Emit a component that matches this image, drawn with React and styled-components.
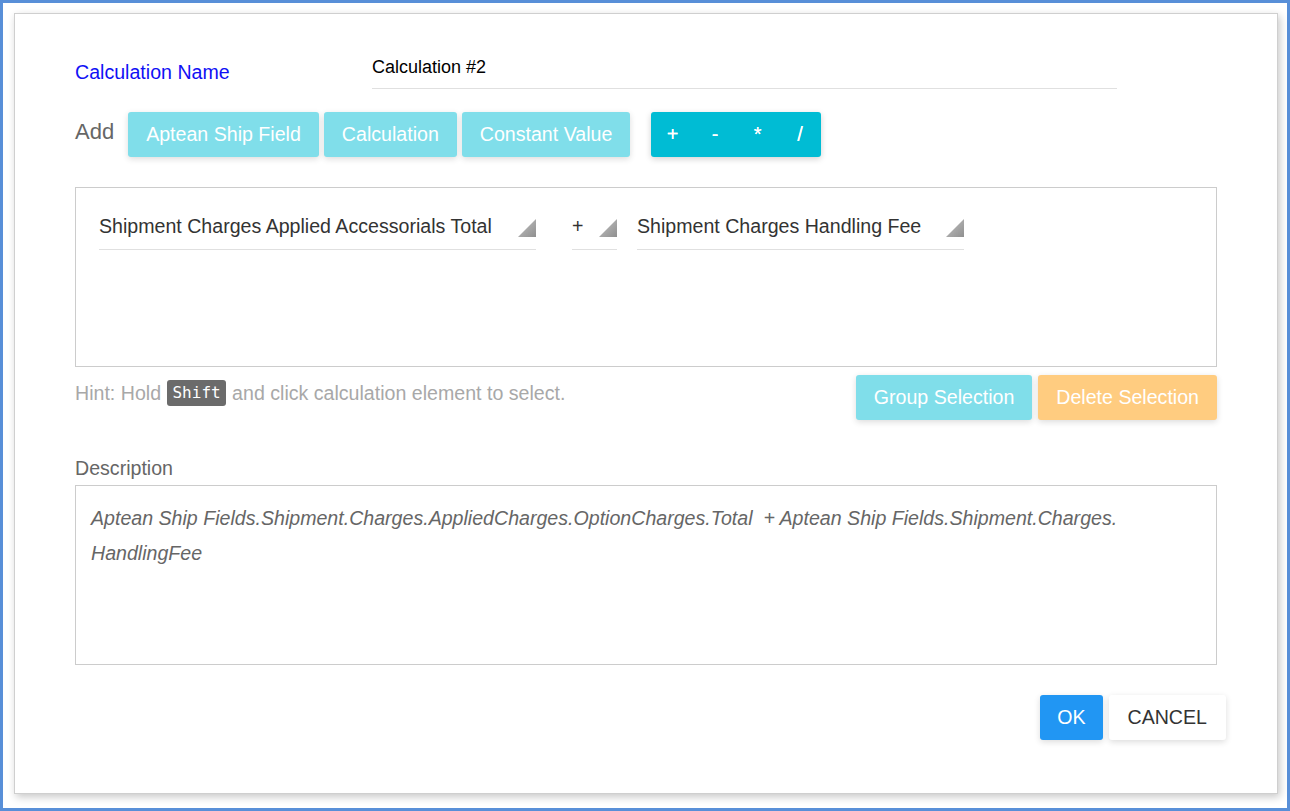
import React from 'react';
import styled, { createGlobalStyle } from 'styled-components';

const GlobalStyle = createGlobalStyle`
  html, body {
    margin: 0;
    padding: 0;
    background: #fff;
  }
  * {
    box-sizing: border-box;
  }
`;

const Frame = styled.div`
  height: 100vh;
  border: 3px solid #588fd8;
  padding: 10px 9px 14px 11px;
  font-family: "Liberation Sans", Arial, sans-serif;
`;

const Dialog = styled.div`
  height: 100%;
  background: #fff;
  border: 1px solid #cfcfcf;
  box-shadow: 2px 3px 8px rgba(0, 0, 0, 0.22);
  padding: 38px 60px 0 60px;
`;

const NameRow = styled.div`
  display: flex;
  align-items: flex-start;
`;

const NameLabel = styled.label`
  width: 297px;
  padding-top: 8px;
  font-size: 19.6px;
  line-height: 24px;
  color: #1010f5;
`;

const NameInput = styled.div`
  width: 745px;
  padding: 3px 0 9px;
  font-size: 18px;
  line-height: 24px;
  color: #000;
  border-bottom: 1px solid #e0e0e0;
`;

const AddRow = styled.div`
  display: flex;
  align-items: flex-start;
  margin-top: 23px;
`;

const AddLabel = styled.span`
  font-size: 22px;
  line-height: 26px;
  padding-top: 7px;
  margin-right: 14px;
  color: #666;
`;

const Button = styled.button`
  height: 45px;
  padding: 0 ${(p) => p.$pad || 18}px;
  border: none;
  border-radius: 3px;
  font-family: inherit;
  font-size: 19.6px;
  color: ${(p) => (p.$kind === 'cancel' ? '#333' : '#fff')};
  background: ${(p) =>
    ({
      light: '#80deea',
      warn: '#ffcc80',
      primary: '#2196f3',
      cancel: '#fff',
    }[p.$kind] || '#80deea')};
  box-shadow: 0 2px 6px rgba(0, 0, 0, 0.14);
  white-space: nowrap;
  cursor: pointer;
`;

const ButtonGroup = styled.div`
  display: flex;
  gap: ${(p) => p.$gap || 5}px;
`;

const OpGroup = styled.div`
  display: flex;
  margin-left: 21px;
  border-radius: 3px;
  background: #00bcd4;
  box-shadow: 0 2px 6px rgba(0, 0, 0, 0.18);
  overflow: hidden;
`;

const OpButton = styled.button`
  width: 42.5px;
  height: 45px;
  padding: 0;
  border: none;
  background: transparent;
  color: #fff;
  font-family: inherit;
  font-size: 20px;
  font-weight: 400;
  text-shadow: 0 0 0.6px #fff;
  cursor: pointer;
`;

const Canvas = styled.div`
  margin-top: 30px;
  height: 180px;
  border: 1px solid #cccccc;
  padding: 17px 23px;
  display: flex;
  align-items: flex-start;
`;

const Select = styled.div`
  display: flex;
  justify-content: space-between;
  width: ${(p) => p.$width}px;
  height: 45px;
  margin-left: ${(p) => p.$gap || 0}px;
  border-bottom: 1px solid #e0e0e0;
`;

const SelectText = styled.span`
  padding-top: 9px;
  font-size: 19.6px;
  line-height: 24px;
  color: #333;
  white-space: nowrap;
`;

const Caret = styled.span`
  align-self: flex-end;
  width: 18px;
  height: 18px;
  margin-bottom: 12px;
  background: linear-gradient(135deg, #c4c4c4, #8f8f8f);
  clip-path: polygon(100% 0, 100% 100%, 0 100%);
`;

const HintRow = styled.div`
  display: flex;
  justify-content: space-between;
  align-items: flex-start;
  margin-top: 8px;
`;

const Hint = styled.p`
  margin: 0;
  padding-top: 5px;
  font-size: 19.6px;
  line-height: 26px;
  color: #a8a8a8;
`;

const Kbd = styled.kbd`
  display: inline-block;
  height: 26px;
  padding: 0 5px;
  margin: 0 1px;
  border-radius: 3px;
  background: #6b6b6b;
  color: #fff;
  font-family: "DejaVu Sans Mono", monospace;
  font-size: 16px;
  line-height: 26px;
  vertical-align: top;
`;

const SectionLabel = styled.div`
  margin-top: 36px;
  font-size: 19.6px;
  line-height: 24px;
  color: #666;
`;

const DescBox = styled.div`
  margin-top: 5px;
  height: 180px;
  border: 1px solid #cccccc;
  padding: 15px 15px;
  font-size: 19.6px;
  line-height: 35px;
  font-style: italic;
  color: #666;
`;

const Footer = styled.div`
  display: flex;
  justify-content: flex-end;
  gap: 6px;
  margin-top: 30px;
  margin-right: -9px;
`;

export default function App() {
  return (
    <>
      <GlobalStyle />
      <Frame>
        <Dialog>
          <NameRow>
            <NameLabel>Calculation Name</NameLabel>
            <NameInput>Calculation #2</NameInput>
          </NameRow>

          <AddRow>
            <AddLabel>Add</AddLabel>
            <ButtonGroup>
              <Button $kind="light">Aptean Ship Field</Button>
              <Button $kind="light">Calculation</Button>
              <Button $kind="light">Constant Value</Button>
            </ButtonGroup>
            <OpGroup>
              {['+', '-', '*', '/'].map((op) => (
                <OpButton key={op}>{op}</OpButton>
              ))}
            </OpGroup>
          </AddRow>

          <Canvas>
            <Select $width={437}>
              <SelectText>Shipment Charges Applied Accessorials Total</SelectText>
              <Caret />
            </Select>
            <Select $width={45} $gap={36}>
              <SelectText>+</SelectText>
              <Caret />
            </Select>
            <Select $width={327} $gap={20}>
              <SelectText>Shipment Charges Handling Fee</SelectText>
              <Caret />
            </Select>
          </Canvas>

          <HintRow>
            <Hint>
              Hint: Hold <Kbd>Shift</Kbd> and click calculation element to select.
            </Hint>
            <ButtonGroup $gap={6}>
              <Button $kind="light">Group Selection</Button>
              <Button $kind="warn">Delete Selection</Button>
            </ButtonGroup>
          </HintRow>

          <SectionLabel>Description</SectionLabel>
          <DescBox>
            Aptean Ship Fields.Shipment.Charges.AppliedCharges.OptionCharges.Total&nbsp; + Aptean Ship Fields.Shipment.Charges.
            <br />
            HandlingFee
          </DescBox>

          <Footer>
            <Button $kind="primary" $pad={17}>OK</Button>
            <Button $kind="cancel" $pad={19}>CANCEL</Button>
          </Footer>
        </Dialog>
      </Frame>
    </>
  );
}
